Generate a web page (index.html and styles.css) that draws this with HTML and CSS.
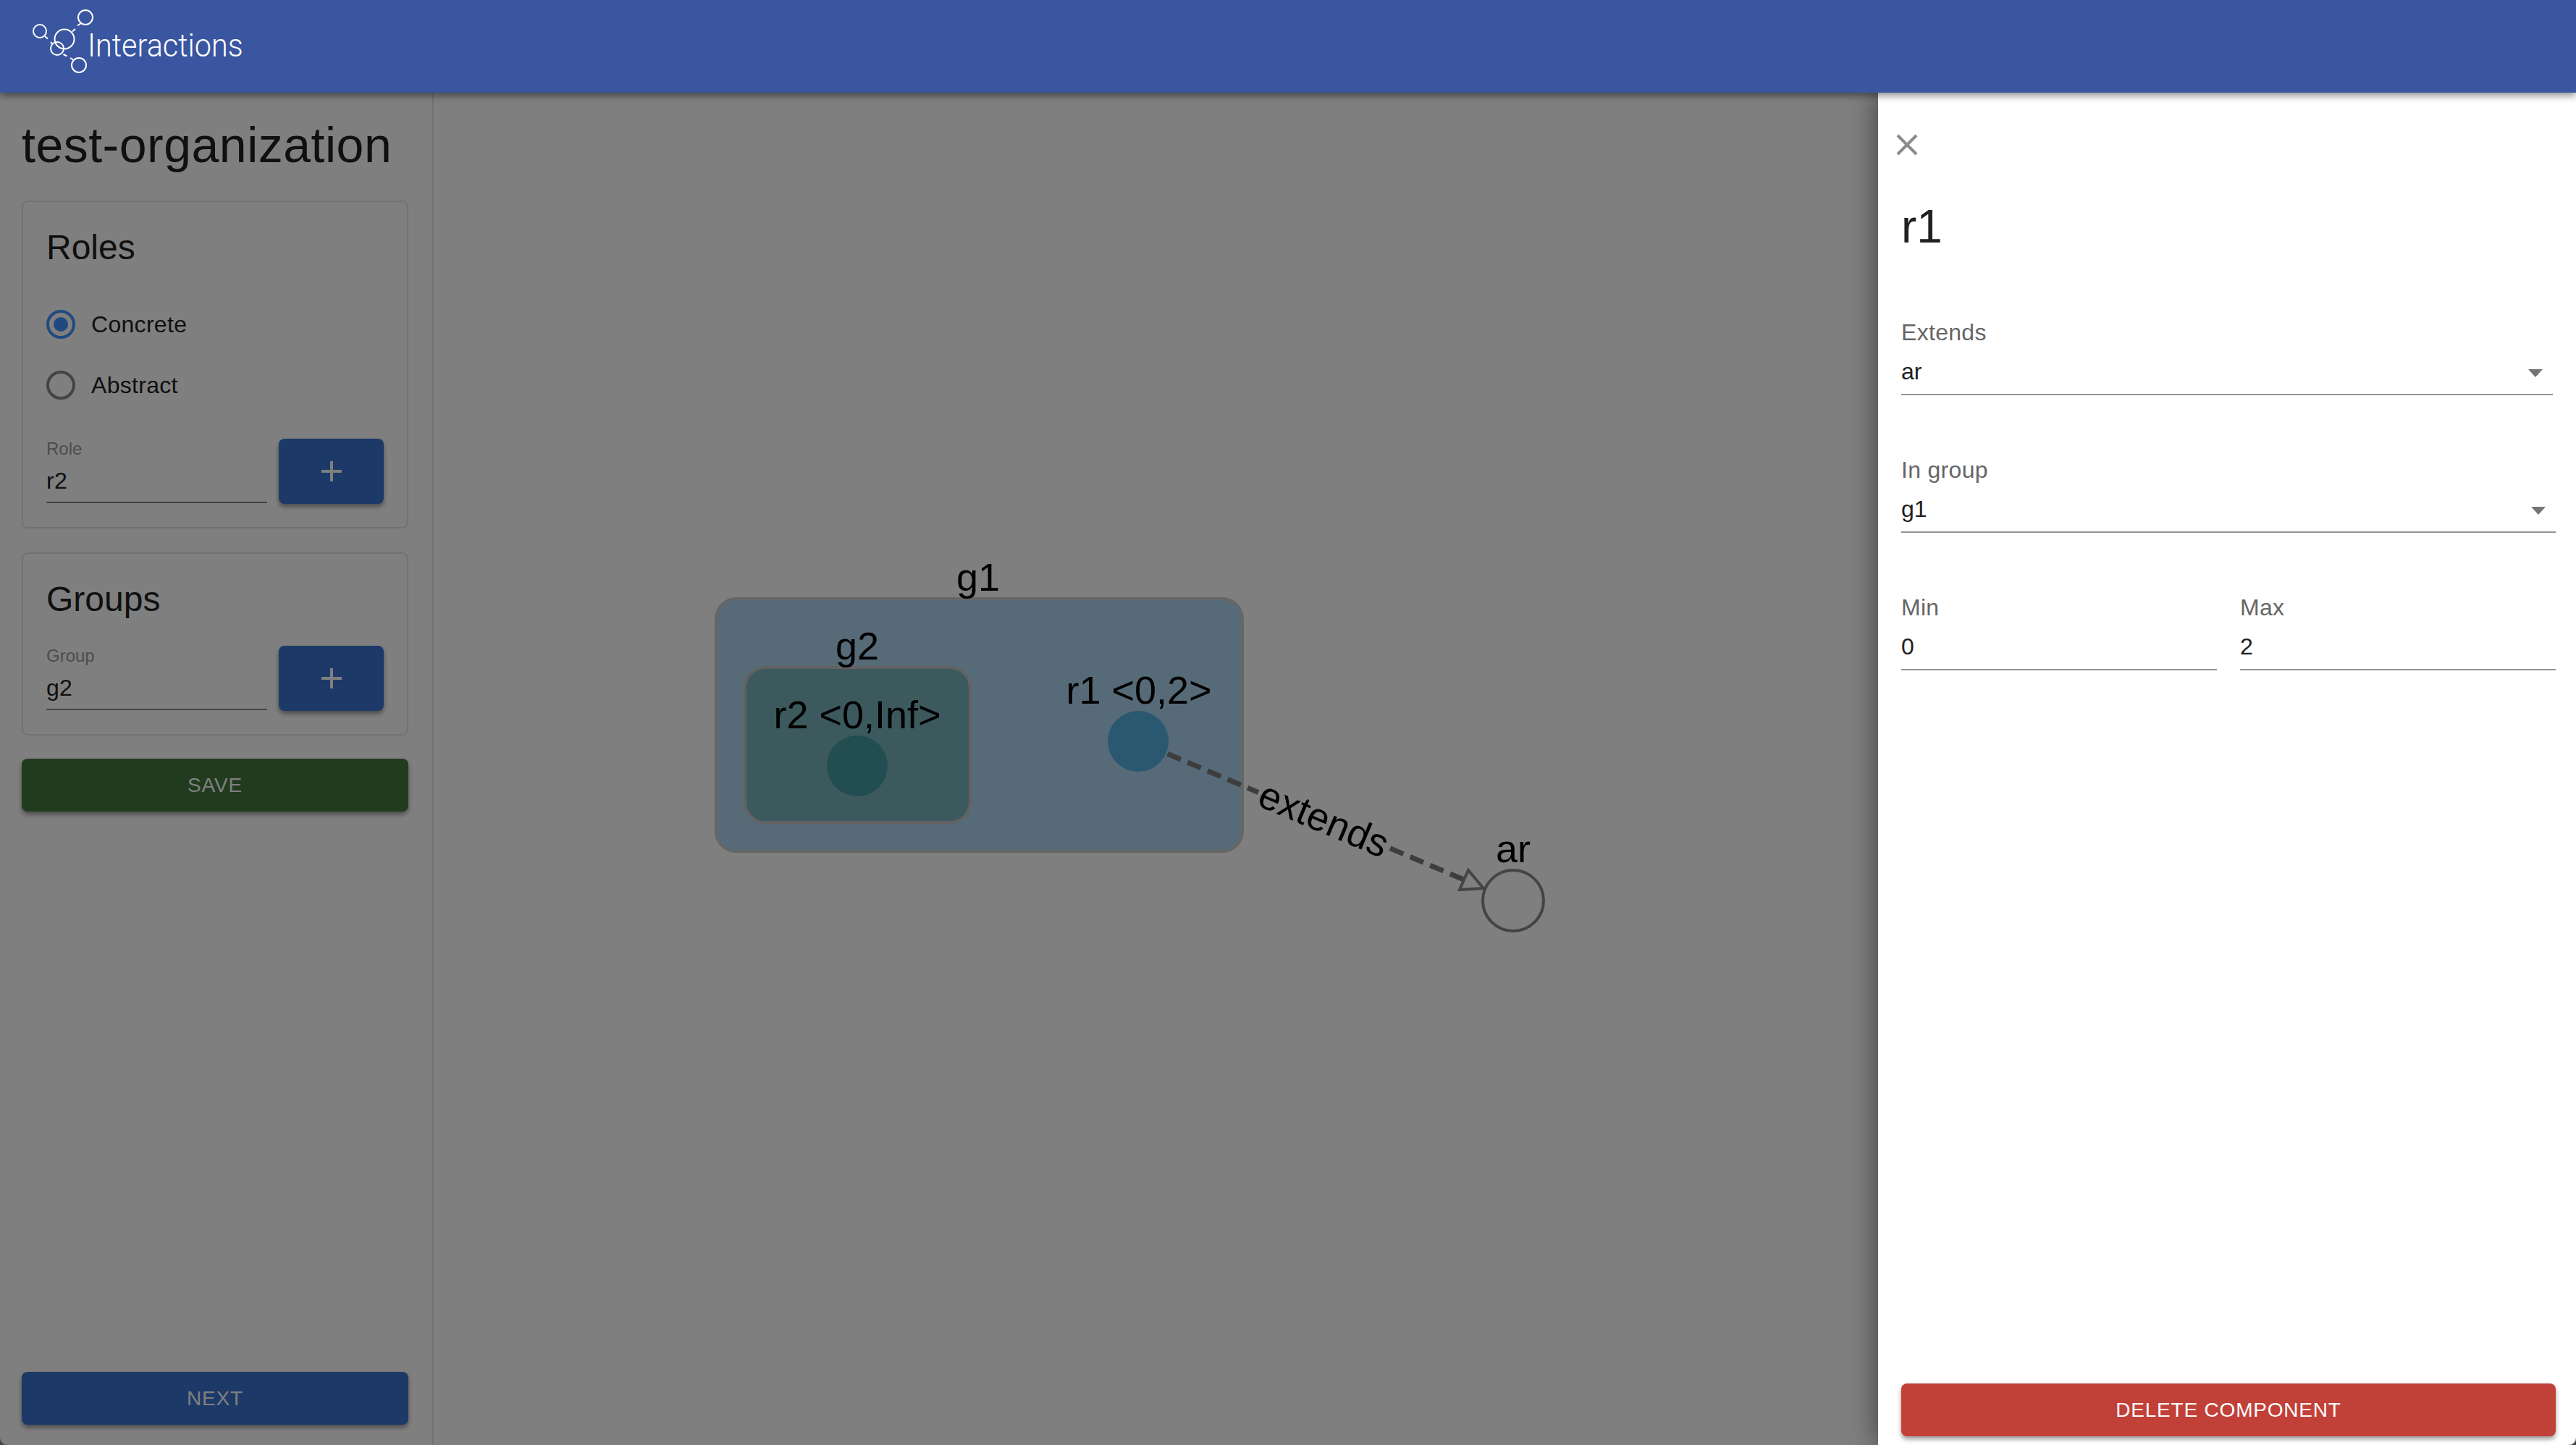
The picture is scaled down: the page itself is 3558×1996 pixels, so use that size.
FILE: index.html
```html
<!DOCTYPE html>
<html lang="en">
<head>
    <meta charset="UTF-8">
    <meta name="viewport" content="width=device-width, initial-scale=1.0">
    <title>Interactions</title>
    <link rel="stylesheet" href="styles.css">
</head>
<body>
    <header class="app-bar">
        <svg class="logo" viewBox="40 0 90 128" width="90" height="128">
            <circle cx="118" cy="24" r="10"/>
            <circle cx="55" cy="43" r="9"/>
            <circle cx="89" cy="54" r="13.5"/>
            <circle cx="79" cy="67" r="9"/>
            <circle cx="109" cy="90" r="10"/>
            <path d="M107 35.5l5-3.5M100 43.5l4-3.5M62 50l4 3.5M70 58l3 3M87.500 75l5 2.500M97 80l4 2.500"/>
        </svg>
        <span class="brand">Interactions</span>
    </header>

    <div class="layout">
        <aside class="sidebar">
            <h1 class="org-title">test-organization</h1>

            <section class="card">
                <h2 class="card-title">Roles</h2>
                <div class="radio-list">
                    <label class="radio-row">
                        <svg class="radio radio-on" viewBox="0 0 40 40" width="40" height="40">
                            <circle class="ring" cx="20" cy="20" r="18"/>
                            <circle class="dot" cx="20" cy="20" r="10"/>
                        </svg>
                        Concrete
                    </label>
                    <label class="radio-row">
                        <svg class="radio" viewBox="0 0 40 40" width="40" height="40">
                            <circle class="ring" cx="20" cy="20" r="18"/>
                        </svg>
                        Abstract
                    </label>
                </div>
                <div class="add-row">
                    <div class="add-field">
                        <div class="small-label">Role</div>
                        <div class="small-value">r2</div>
                    </div>
                    <button class="add-btn" type="button">
                        <svg viewBox="0 0 28 28" width="28" height="28"><path d="M14 0v28M0 14h28"/></svg>
                    </button>
                </div>
            </section>

            <section class="card card-groups">
                <h2 class="card-title">Groups</h2>
                <div class="add-row">
                    <div class="add-field">
                        <div class="small-label">Group</div>
                        <div class="small-value">g2</div>
                    </div>
                    <button class="add-btn" type="button">
                        <svg viewBox="0 0 28 28" width="28" height="28"><path d="M14 0v28M0 14h28"/></svg>
                    </button>
                </div>
            </section>

            <button class="btn btn-save" type="button">SAVE</button>
            <button class="btn btn-next" type="button">NEXT</button>
        </aside>

        <main class="canvas">
            <svg class="graph" viewBox="599 128 2959 1868" width="2959" height="1868">
                <rect class="group-outer" x="989" y="827" width="727" height="349" rx="28"/>
                <rect class="group-inner" x="1029" y="922" width="311" height="214" rx="28"/>
                <line class="edge" x1="1557.400" y1="1017.800" x2="1738" y2="1094.500"/>
                <line class="edge" x1="1920" y1="1171.800" x2="2022" y2="1215.100"/>
                <polygon class="arrow" points="2028,1202 2016,1229 2049,1227"/>
                <circle class="role-r1" cx="1572" cy="1024" r="42"/>
                <circle class="role-r2" cx="1184" cy="1058" r="42"/>
                <circle class="role-ar" cx="2090" cy="1244" r="42"/>
                <text x="1351" y="816">g1</text>
                <text x="1184" y="911">g2</text>
                <text x="1184" y="1006">r2 &lt;0,Inf&gt;</text>
                <text x="1573" y="972">r1 &lt;0,2&gt;</text>
                <text x="2090" y="1191">ar</text>
                <text x="1828" y="1133" dy="17" transform="rotate(23 1828 1133)">extends</text>
            </svg>
        </main>
    </div>

    <div class="backdrop"></div>

    <aside class="drawer">
        <button class="close-btn" type="button">
            <svg viewBox="0 0 48 48" width="48" height="48"><path d="M11 11l26 26M37 11L11 37"/></svg>
        </button>
        <h2 class="drawer-title">r1</h2>

        <div class="field field-first field-short">
            <div class="field-label">Extends</div>
            <div class="field-value">ar<span class="caret"></span></div>
        </div>
        <div class="field">
            <div class="field-label">In group</div>
            <div class="field-value">g1<span class="caret"></span></div>
        </div>
        <div class="field-pair">
            <div class="field">
                <div class="field-label">Min</div>
                <div class="field-value">0</div>
            </div>
            <div class="field">
                <div class="field-label">Max</div>
                <div class="field-value">2</div>
            </div>
        </div>

        <button class="btn btn-delete" type="button">DELETE COMPONENT</button>
    </aside>
</body>
</html>
```

FILE: styles.css
```css
* {
    box-sizing: border-box;
}

html, body {
    height: 100%;
}

body {
    margin: 0;
    width: 3558px;
    height: 1996px;
    overflow: hidden;
    display: flex;
    flex-direction: column;
    position: relative;
    background-color: #fff;
    color: #212121;
    font-family: "Liberation Sans", Arial, sans-serif;
}

/* rounded window corners at the bottom of the capture */
body::before, body::after {
    content: "";
    position: absolute;
    z-index: 4;
    bottom: 0;
    width: 10px;
    height: 10px;
}

body::before {
    left: 0;
    background: radial-gradient(circle at top right, transparent 9px, #4a4036 11px);
}

body::after {
    right: 0;
    background: radial-gradient(circle at top left, transparent 9px, #4a4036 11px);
}

.app-bar {
    position: relative;
    z-index: 3;
    flex: 0 0 128px;
    display: flex;
    align-items: center;
    padding-left: 40px;
    background-color: #3a56a0;
    box-shadow: 0 4px 10px rgba(0, 0, 0, 0.45);
}

.logo {
    flex: none;
    margin-right: -8px;
    overflow: visible;
}

.logo circle, .logo path {
    fill: none;
    stroke: #fff;
    stroke-width: 2;
}

.brand {
    display: inline-block;
    margin: 0 0 2px -1px;
    color: #fff;
    font-family: Roboto, sans-serif;
    font-weight: 300;
    font-size: 45px;
    line-height: 50px;
    transform: scaleX(0.92);
    transform-origin: left center;
}

.layout {
    flex: 1;
    display: flex;
    min-height: 0;
}

.sidebar {
    flex: 0 0 599px;
    display: flex;
    flex-direction: column;
    padding: 32px 33px 28px 30px;
    border-right: 2px solid #e4e4e4;
}

.org-title {
    margin: 0 0 37px;
    font-weight: 400;
    font-size: 68px;
    line-height: 80px;
    letter-spacing: 0.5px;
}

.card {
    padding: 35px 32px 32px;
    border: 2px solid #e4e4e4;
    border-radius: 8px;
}

.card-groups {
    margin-top: 33px;
}

.card-title {
    margin: 0;
    font-weight: 400;
    font-size: 48px;
    line-height: 56px;
}

.radio-list {
    margin: 36px 0 32px;
}

.radio-row {
    display: flex;
    align-items: center;
    gap: 22px;
    height: 84px;
    font-size: 32px;
    line-height: 40px;
    letter-spacing: 0.3px;
}

.radio {
    flex: none;
}

.radio .ring {
    fill: none;
    stroke: #888;
    stroke-width: 4;
}

.radio-on .ring {
    stroke: #4294ff;
}

.radio-on .dot {
    fill: #3f94ff;
}

.add-row {
    display: flex;
    gap: 16px;
    align-items: flex-start;
}

.card-groups .add-row {
    margin-top: 36px;
}

.add-field {
    width: 305px;
    border-bottom: 2px solid #888;
}

.small-label {
    margin-bottom: 12px;
    color: #999;
    font-size: 24px;
    line-height: 28px;
}

.small-value {
    padding-bottom: 11px;
    font-size: 32px;
    line-height: 36px;
    letter-spacing: 0.3px;
}

.add-btn {
    width: 145px;
    height: 90px;
    padding: 0;
    display: flex;
    align-items: center;
    justify-content: center;
    border: none;
    border-radius: 8px;
    background-color: #3872d0;
    box-shadow: 0 4px 6px rgba(0, 0, 0, 0.4);
}

.add-btn path {
    fill: none;
    stroke: #fff;
    stroke-width: 4;
}

.btn {
    display: block;
    width: 100%;
    height: 73px;
    flex: none;
    border: none;
    border-radius: 8px;
    color: #fff;
    font-family: "Liberation Sans", Arial, sans-serif;
    font-size: 28px;
    letter-spacing: 0.8px;
    box-shadow: 0 4px 6px rgba(0, 0, 0, 0.4);
}

.btn-save {
    margin-top: 32px;
    background-color: #42763c;
}

.btn-next {
    margin-top: auto;
    background-color: #3872d0;
}

.canvas {
    flex: 1;
    min-width: 0;
}

.graph {
    display: block;
}

.graph text {
    fill: #000;
    font-size: 54px;
    text-anchor: middle;
}

.group-outer {
    fill: #acd6ee;
    stroke: #ccc;
    stroke-width: 4;
}

.group-inner {
    fill: #78b2bc;
    stroke: #c4c4c4;
    stroke-width: 4;
}

.edge {
    stroke: #7a7a7a;
    stroke-width: 7;
    stroke-dasharray: 20 10;
}

.arrow {
    fill: none;
    stroke: #888;
    stroke-width: 4;
}

.role-r1 {
    fill: #54b0e0;
}

.role-r2 {
    fill: #449aa2;
}

.role-ar {
    fill: none;
    stroke: #888;
    stroke-width: 4;
}

/* dims everything under the drawer */
.backdrop {
    position: absolute;
    z-index: 1;
    top: 128px;
    right: 0;
    bottom: 0;
    left: 0;
    background-color: rgba(0, 0, 0, 0.5);
}

.drawer {
    position: absolute;
    z-index: 2;
    top: 128px;
    right: 0;
    bottom: 0;
    width: 964px;
    display: flex;
    flex-direction: column;
    padding: 48px 28px 12px 32px;
    background-color: #fff;
    box-shadow: -8px 0 30px rgba(0, 0, 0, 0.35);
}

.close-btn {
    width: 48px;
    height: 48px;
    margin-left: -16px;
    padding: 0;
    border: none;
    background: none;
}

.close-btn svg {
    display: block;
}

.close-btn path {
    fill: none;
    stroke: #8a8a8a;
    stroke-width: 4;
}

.drawer-title {
    margin: 49px 0 0;
    font-weight: 400;
    font-size: 64px;
    line-height: 80px;
}

.field {
    margin-top: 85px;
    border-bottom: 2px solid #949494;
}

.field-first {
    margin-top: 88px;
}

.field-short {
    margin-right: 4px;
}

.field-label {
    margin-bottom: 18px;
    color: #666;
    font-size: 32px;
    line-height: 36px;
    letter-spacing: 0.3px;
}

.field-value {
    display: flex;
    justify-content: space-between;
    padding-bottom: 13px;
    color: #212121;
    font-size: 32px;
    line-height: 36px;
}

.caret {
    width: 0;
    height: 0;
    margin: 15px 14px 0 0;
    border-left: 10px solid transparent;
    border-right: 10px solid transparent;
    border-top: 11px solid #757575;
}

.field-pair {
    display: grid;
    grid-template-columns: 1fr 1fr;
    column-gap: 32px;
}

.btn-delete {
    margin-top: auto;
    background-color: #c14037;
}
```
